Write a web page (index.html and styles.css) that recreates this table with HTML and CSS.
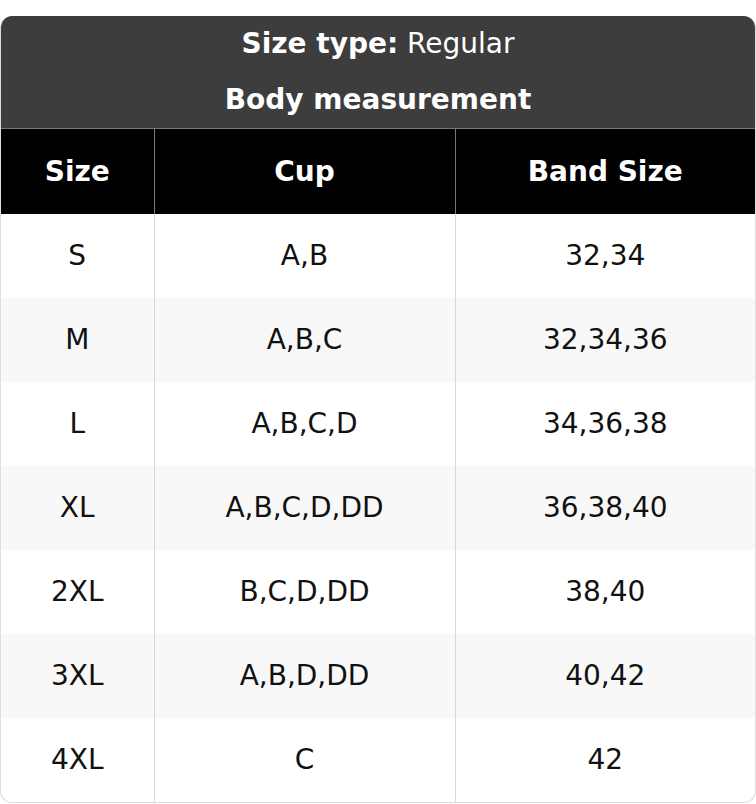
FILE: index.html
```html
<!DOCTYPE html>
<html lang="en">
<head>
<meta charset="utf-8">
<title>Size chart</title>
<link rel="stylesheet" href="styles.css">
</head>
<body>
<div class="card">
  <div class="title">
    <div class="title-row"><b>Size type:</b> Regular</div>
    <div class="title-row"><b>Body measurement</b></div>
  </div>
  <table class="chart">
    <colgroup>
      <col class="c1"><col class="c2"><col class="c3">
    </colgroup>
    <thead>
      <tr><th>Size</th><th>Cup</th><th>Band Size</th></tr>
    </thead>
    <tbody>
      <tr><td>S</td><td>A,B</td><td>32,34</td></tr>
      <tr><td>M</td><td>A,B,C</td><td>32,34,36</td></tr>
      <tr><td>L</td><td>A,B,C,D</td><td>34,36,38</td></tr>
      <tr><td>XL</td><td>A,B,C,D,DD</td><td>36,38,40</td></tr>
      <tr><td>2XL</td><td>B,C,D,DD</td><td>38,40</td></tr>
      <tr><td>3XL</td><td>A,B,D,DD</td><td>40,42</td></tr>
      <tr><td>4XL</td><td>C</td><td>42</td></tr>
    </tbody>
  </table>
</div>
</body>
</html>
```
FILE: styles.css
```css
html, body {
  margin: 0;
  padding: 0;
  background: #fff;
}
body {
  padding-top: 16px;
  font-family: "DejaVu Sans", sans-serif;
  font-size: 28px;
  color: #111;
}
.card {
  width: 756px;
  box-sizing: border-box;
  border: 1px solid #dddddd;
  border-top: none;
  border-radius: 12px;
  overflow: hidden;
}
.title {
  background: #3d3d3d;
  color: #fff;
  text-align: center;
}
.title-row {
  height: 56px;
  line-height: 56px;
}
.title-row b {
  font-weight: bold;
}
.chart {
  width: 100%;
  border-collapse: collapse;
  table-layout: fixed;
}
.c1 { width: 153px; }
.c2 { width: 301px; }
.chart th {
  background: #000;
  color: #fff;
  font-weight: bold;
  height: 85px;
  padding: 0;
  border-top: 1px solid #7a7a7a;
  border-left: 1px solid #7a7a7a;
  box-sizing: border-box;
}
.chart th:first-child { border-left: none; }
.chart td {
  height: 84px;
  padding: 0;
  text-align: center;
  border-left: 1px solid #d9d9d9;
}
.chart td:first-child { border-left: none; }
.chart tbody tr:nth-child(even) td {
  background: #f8f8f8;
}
```
